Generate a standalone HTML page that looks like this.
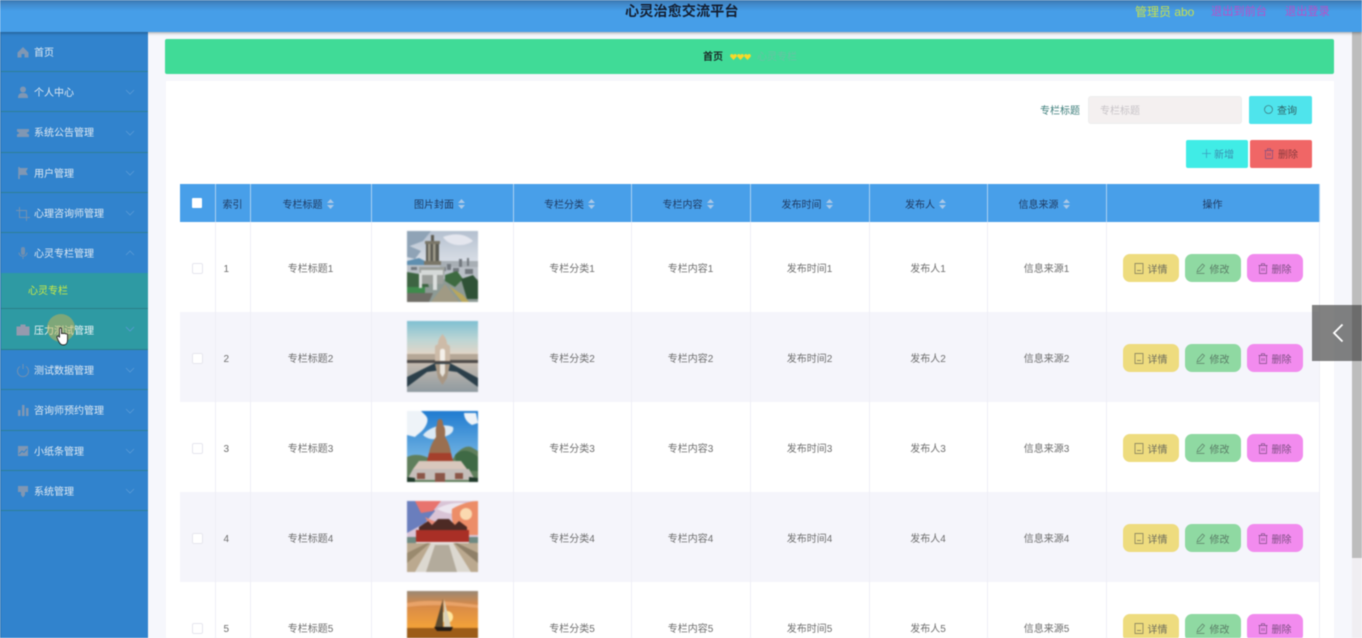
<!DOCTYPE html>
<html lang="zh"><head><meta charset="utf-8"><title>心灵治愈交流平台</title>
<style>
html,body{margin:0;padding:0;width:1362px;height:638px;overflow:hidden;background:#f6f7fc}
body{position:relative;font-family:"Liberation Sans","Noto Sans CJK SC",sans-serif;font-size:10px;color:#666}
#wrap{position:absolute;left:0;top:0;width:1362px;height:638px;overflow:hidden;filter:blur(.6px)}
.a{position:absolute}
#top{left:0;top:0;width:1362px;height:32px;background:linear-gradient(#3b76ad 0,#4189cb 4px,#469ee8 11px,#469ee8 100%);box-shadow:0 1px 3px rgba(0,0,0,.35);z-index:3}
#top span{position:absolute;white-space:nowrap;font-size:11.2px;top:5px;line-height:15px}
#side{left:0;top:0;width:148px;height:638px;background:#3183cd;border-left:1px solid #2a70ae;box-sizing:border-box}
.m{position:absolute;left:0;width:147px;box-sizing:border-box;border-bottom:1px solid #2e7f96;color:#dfe9f2}
.m b{position:absolute;left:33px;font-weight:400;white-space:nowrap;line-height:14px;margin-top:2px}
.m svg.ic{position:absolute;left:15px;width:14px;height:14px;opacity:.85}
.m svg.ch{position:absolute;left:124px;width:10px;height:6px}
#bread{left:165px;top:39px;width:1169px;height:35px;background:#40db97;border-radius:2px}
#card{left:166px;top:81px;width:1168px;height:557px;background:#fff}
table{position:absolute;left:180px;top:184px;width:1139px;border-collapse:collapse;table-layout:fixed}
th{height:38px;background:#489fe9;color:#1f3b63;font-weight:400;border-right:1px solid #a9d0f2;padding:0;text-align:center;box-sizing:border-box}
td{height:90px;padding:0;text-align:center;border-right:1px solid #eeeef6;box-sizing:border-box;color:#6e6e6e}
tr.e td{background:#f5f5fb}
td:nth-child(-n+2){padding-top:4px}
td:nth-child(2){text-align:left;padding-left:8px}
th svg.s{width:7px;height:10px;vertical-align:-1px;margin-left:4px;margin-right:5px}
.cb{display:inline-block;width:9px;height:9px;border:1px solid #e6e6ee;background:#fff;border-radius:2px;vertical-align:middle}
.ops{display:flex;justify-content:flex-start;padding-left:16px;gap:6px;position:relative;top:1px}
.b{width:56px;height:28px;border-radius:7px;color:#6d6c5c;display:flex;align-items:center;justify-content:center;gap:4px;box-sizing:border-box}
.b svg{width:10px;height:11px}
.y{background:#eedc7f}.g{background:#8fd9a2;color:#5a7d66}.p{background:#f28bee;color:#7c4e82}
td svg.ph{display:block;margin:0 auto;width:71px;height:71px;position:relative;top:-1px;filter:blur(.5px)}
</style></head><body>
<svg width="0" height="0" style="position:absolute">
<symbol id="sort" viewBox="0 0 7 10"><path d="M3.500 0L7 4H0zM3.500 10L0 6h7z" fill="#a9c8e8"/></symbol>
<symbol id="doc" viewBox="0 0 10 11"><path d="M1 .5h8v10H1zM3 7.500h4" fill="none" stroke="#77745a" stroke-width=".7"/></symbol>
<symbol id="pen" viewBox="0 0 10 11"><path d="M1 9l1-3 4.500-5 2 1.700L4 8zM.5 10.400h8" fill="none" stroke="#5a7d66" stroke-width=".7"/></symbol>
<symbol id="del" viewBox="0 0 10 11"><path d="M1.500 2.500h7v8h-7zM.5 2.500h9M3.500 2.500V.7h3v1.800M4 5v3M6 5v3" fill="none" stroke="#7c4e82" stroke-width=".7"/></symbol>
<symbol id="chd" viewBox="0 0 10 6"><path d="M1 1l4 4 4-4" fill="none" stroke="#5a9bd6" stroke-width=".8"/></symbol>
<symbol id="chu" viewBox="0 0 10 6"><path d="M1 5l4-4 4 4" fill="none" stroke="#5a9bd6" stroke-width=".8"/></symbol>
<symbol id="heart" viewBox="0 0 8 7"><path d="M4 7L.4 3.200C-.6 1.600.6 0 2 0c1 0 1.600.5 2 1.200C4.400.5 5 0 6 0c1.400 0 2.600 1.600 1.600 3.200z" fill="#f7d92a"/></symbol>
</svg>
<div id="wrap">
<div class="a" id="top">
<span style="left:625px;top:4px;font-size:14.2px;font-weight:700;color:#141e30;line-height:16px">心灵治愈交流平台</span>
<span style="left:1135px;color:#c5e04e;font-size:12px">管理员 abo</span>
<span style="left:1211px;color:#b850c8">退出到前台</span>
<span style="left:1285px;color:#b850c8">退出登录</span>
</div>
<div class="a" id="side">
<div class="m" style="top:32px;height:40px"><svg class="ic" style="top:13px" viewBox="0 0 14 14"><path d="M7 2L1.500 7.500V12.500H5.500V9H8.500V12.500H12.500V7.500z" fill="#8d9bb0"/></svg><b style="top:13px">首页</b></div>
<div class="m" style="top:72px;height:40px"><svg class="ic" style="top:13px" viewBox="0 0 14 14"><circle cx="7" cy="4.500" r="3" fill="#8d9bb0"/><path d="M2 13c0-4 2-5 5-5s5 1 5 5z" fill="#8d9bb0"/></svg><b style="top:13px">个人中心</b><svg class="ch" style="top:17px"><use href="#chd"/></svg></div>
<div class="m" style="top:112px;height:41px"><svg class="ic" style="top:14px" viewBox="0 0 14 14"><path d="M1 3h12v2.500L10.500 7 13 8.500V11H1V8.500L3.500 7 1 5.500z" fill="#8d9bb0"/></svg><b style="top:13px">系统公告管理</b><svg class="ch" style="top:18px"><use href="#chd"/></svg></div>
<div class="m" style="top:153px;height:40px"><svg class="ic" style="top:13px" viewBox="0 0 14 14"><path d="M3 1v12" stroke="#8d9bb0" stroke-width="1.500"/><path d="M3 2h9L10 5.500 12 9H3z" fill="#8d9bb0"/></svg><b style="top:13px">用户管理</b><svg class="ch" style="top:17px"><use href="#chd"/></svg></div>
<div class="m" style="top:193px;height:40px"><svg class="ic" style="top:14px" viewBox="0 0 14 14"><path d="M3.500 0V10.500H14M0 3.500H10.500V14" fill="none" stroke="#7d93ad" stroke-width="1"/></svg><b style="top:13px">心理咨询师管理</b><svg class="ch" style="top:17px"><use href="#chd"/></svg></div>
<div class="m" style="top:233px;height:40px;border-bottom:0"><svg class="ic" style="top:13px" viewBox="0 0 14 14"><rect x="5" y="1" width="4" height="8" rx="2" fill="#7d93ad"/><path d="M3 6.500c0 5 8 5 8 0M7 10v3" fill="none" stroke="#7d93ad"/></svg><b style="top:13px">心灵专栏管理</b><svg class="ch" style="top:17px"><use href="#chu"/></svg></div>
<div class="m" style="top:273px;height:36px;background:#2e9aa3;border-bottom:1px solid #2b7f88"><b style="left:27px;top:10px;color:#c9ea45">心灵专栏</b></div>
<div class="m" style="top:309px;height:41px;background:#2e9aa3;border-bottom:1px solid #2b7f88;color:#eef6f6"><svg class="ic" style="top:13px" viewBox="0 0 14 14"><path d="M1 5h12v8H1zM5 5V3h4v2" fill="#a89ab0" stroke="#a89ab0"/></svg><b style="top:14px">压力测试管理</b><svg class="ch" style="top:17px"><use href="#chd"/></svg></div>
<div class="m" style="top:350px;height:40px"><svg class="ic" style="top:13px" viewBox="0 0 14 14"><path d="M4 3.500a5.500 5.500 0 1 0 6 0M7 1v5" fill="none" stroke="#7d93ad"/></svg><b style="top:13px">测试数据管理</b><svg class="ch" style="top:17px"><use href="#chd"/></svg></div>
<div class="m" style="top:390px;height:41px"><svg class="ic" style="top:13px" viewBox="0 0 14 14"><path d="M2 7h2.500v6H2zM6 2h2.500v11H6zM10 5h2.500v8H10z" fill="#8d9bb0"/></svg><b style="top:13px">咨询师预约管理</b><svg class="ch" style="top:18px"><use href="#chd"/></svg></div>
<div class="m" style="top:431px;height:40px"><svg class="ic" style="top:13px" viewBox="0 0 14 14"><path d="M2 2h10v10H2z" fill="#8d9bb0"/><path d="M3 10l3-3 2 1.500L11 5" fill="none" stroke="#3183cd"/></svg><b style="top:13px">小纸条管理</b><svg class="ch" style="top:17px"><use href="#chd"/></svg></div>
<div class="m" style="top:471px;height:40px"><svg class="ic" style="top:13px" viewBox="0 0 14 14"><path d="M2 2h10v6H9v3l-2 2.500L5 11V8H2z" fill="#8d9bb0"/></svg><b style="top:13px">系统管理</b><svg class="ch" style="top:17px"><use href="#chd"/></svg></div>
</div>
<div class="a" style="left:47px;top:314px;width:28px;height:28px;border-radius:50%;background:rgba(205,180,80,.5)"></div>
<svg class="a" style="left:56px;top:327px;width:14px;height:19px" viewBox="0 0 14 19"><path d="M3.500 2c0-1.500 2-1.500 2 0v5c0-1 2-1 2 0 0-1 2-1 2 .3 0-.8 2-.8 2 .5V13c0 3-1.500 5-4 5-2.500 0-3.500-1-5-4L1 10.500c-.5-1.200 1-2 2-1l.5 1z" fill="#fff" stroke="#222" stroke-width=".9"/></svg>

<div class="a" id="bread"><span class="a" style="left:538px;top:12px;color:#1a2c28;font-weight:700;white-space:nowrap;line-height:14px">首页</span>
<svg class="a" style="left:565px;top:15px;width:7px;height:6px"><use href="#heart"/></svg><svg class="a" style="left:572px;top:15px;width:7px;height:6px"><use href="#heart"/></svg><svg class="a" style="left:579px;top:15px;width:7px;height:6px"><use href="#heart"/></svg>
<span class="a" style="left:592px;top:12px;color:#68c3a4;white-space:nowrap;line-height:14px">心灵专栏</span></div>
<div class="a" id="card"></div>

<span class="a" style="left:1040px;top:105px;color:#3f7f7c;white-space:nowrap;line-height:14px">专栏标题</span>
<div class="a" style="left:1088px;top:96px;width:154px;height:28px;background:#f4f0f0;border:1px solid #eee;border-radius:3px;box-sizing:border-box"><span class="a" style="left:11px;top:8px;color:#c8c4c8;white-space:nowrap;line-height:14px">专栏标题</span></div>
<div class="a" style="left:1249px;top:96px;width:63px;height:28px;background:#4fe4ec;border-radius:2px"><svg class="a" style="left:14px;top:8px;width:11px;height:11px" viewBox="0 0 11 11"><circle cx="5.500" cy="5.500" r="4" fill="none" stroke="#3f7f85" stroke-width=".8"/></svg><span class="a" style="left:28px;top:9px;color:#2f6468;white-space:nowrap;line-height:14px">查询</span></div>
<div class="a" style="left:1186px;top:140px;width:62px;height:28px;background:#40ece6;border-radius:2px"><svg class="a" style="left:15px;top:8px;width:11px;height:11px" viewBox="0 0 11 11"><path d="M5.500 1v9M1 5.500h9" stroke="#3a9fc0" stroke-width=".8"/></svg><span class="a" style="left:28px;top:9px;color:#3a8fb0;white-space:nowrap;line-height:14px">新增</span></div>
<div class="a" style="left:1250px;top:140px;width:62px;height:28px;background:#f06666;border-radius:2px"><svg class="a" style="left:14px;top:8px;width:10px;height:11px"><use href="#del"/></svg><span class="a" style="left:28px;top:9px;color:#8a3a3e;white-space:nowrap;line-height:14px">删除</span></div>

<table>
<colgroup><col style="width:35px"><col style="width:35px"><col style="width:121px"><col style="width:142px"><col style="width:118px"><col style="width:119px"><col style="width:119px"><col style="width:118px"><col style="width:119px"><col style="width:213px"></colgroup>
<tr><th><span style="display:inline-block;width:10px;height:10px;background:#fff;border-radius:1px;vertical-align:middle"></span></th><th>索引</th><th>专栏标题<svg class="s"><use href="#sort"/></svg></th><th>图片封面<svg class="s"><use href="#sort"/></svg></th><th>专栏分类<svg class="s"><use href="#sort"/></svg></th><th>专栏内容<svg class="s"><use href="#sort"/></svg></th><th>发布时间<svg class="s"><use href="#sort"/></svg></th><th>发布人<svg class="s"><use href="#sort"/></svg></th><th>信息来源<svg class="s"><use href="#sort"/></svg></th><th>操作</th></tr>

<tr><td><span class="cb"></span></td><td>1</td><td>专栏标题1</td><td>
<svg class="ph" viewBox="0 0 71 71"><defs><linearGradient id="s1" x1="0" y1="0" x2="0" y2="1"><stop offset="0" stop-color="#b4c0cf"/><stop offset="1" stop-color="#dfe3ea"/></linearGradient></defs><rect width="71" height="36" fill="url(#s1)"/><path d="M0 0h24l-8 10-16 6zM0 14l14 6-6 8-8-2z" fill="#8fa3b6"/><path d="M36 6c10-4 22-4 30 4-8 6-24 6-30-4z" fill="#e4e6ee"/><path d="M0 30l12-3 8 4v5H0z" fill="#5f8fb0"/><rect y="34" width="71" height="37" fill="#8d9a95"/><path d="M0 34h71v14H0z" fill="#b9bfc6"/><path d="M33 30h38v6H33z" fill="#a7aeb4"/><path d="M40 33h4v6h-4zM52 28h3v8h-3zM60 27h2v8h-2zM34 36h5v4h-5zM46 37h6v4h-6zM58 38h8v5h-8zM4 36h6v3H4z" fill="#72787e"/><path d="M0 41l18 3 4 12H0z" fill="#3d6442"/><path d="M0 56h18v6H0z" fill="#3f8a4c"/><path d="M38 44l12-4 6 8-8 8-10-6z" fill="#3d6a40"/><path d="M54 48l12-4 5 6v18H60z" fill="#2f5236"/><path d="M42 55l14 9 6 7h-7z" fill="#b9a75c"/><path d="M24 71l14-18 14 18z" fill="#a09a84"/><path d="M0 62h26l-4 9H0z" fill="#6f6d66"/><path d="M19 11h13v22H19z" fill="#5a5a52"/><path d="M21 12h2.500v20H21zM26 12h2.500v20H26z" fill="#a09c8c"/><path d="M24 4h3v7h-3z" fill="#5d5a50"/><path d="M18 10h15v3H18zM17 30h17v4H17z" fill="#7a7668"/><path d="M12 36h26l-2 17H14z" fill="#9ca09c"/><path d="M14 39h22v5H14z" fill="#d5d9d8"/><path d="M12 42h3v15h-3zM26 44h4v15h-4z" fill="#dcdfde"/></svg></td><td>专栏分类1</td><td>专栏内容1</td><td>发布时间1</td><td>发布人1</td><td>信息来源1</td><td><div class="ops"><div class="b y"><svg><use href="#doc"/></svg>详情</div><div class="b g"><svg><use href="#pen"/></svg>修改</div><div class="b p"><svg><use href="#del"/></svg>删除</div></div></td></tr>

<tr class="e"><td><span class="cb"></span></td><td>2</td><td>专栏标题2</td><td>
<svg class="ph" viewBox="0 0 71 71"><defs><linearGradient id="s2" x1="0" y1="0" x2="0" y2="1"><stop offset="0" stop-color="#7fc0d2"/><stop offset=".5" stop-color="#bcd5d4"/><stop offset="1" stop-color="#ecd5c4"/></linearGradient><linearGradient id="w2" x1="0" y1="0" x2="0" y2="1"><stop offset="0" stop-color="#d6c5b5"/><stop offset="1" stop-color="#8f9aa0"/></linearGradient></defs><rect width="71" height="37" fill="url(#s2)"/><rect y="33" width="71" height="38" fill="url(#w2)"/><path d="M0 33h71v8H0z" fill="#b5a797"/><path d="M0 39h71v3H0z" fill="#4d4a48"/><path d="M28 40V26c0-2 2-2 3-3 0-5 3-8 4.500-10 1.500 2 4.500 5 4.500 10 1 1 3 1 3 3v14z" fill="#cdbba8"/><path d="M33 40V30c0-3 5-3 5 0v10z" fill="#f4f0ea"/><path d="M0 66V56L28 42h15l28 15v9L50 51l-15-2-15 2z" fill="#2b3f4a"/><path d="M28 43h15l-3 14-4.500 7-4.500-7z" fill="#a89784"/><path d="M33 43h5v9l-2.500 4-2.500-4z" fill="#e8e4dc"/></svg></td><td>专栏分类2</td><td>专栏内容2</td><td>发布时间2</td><td>发布人2</td><td>信息来源2</td><td><div class="ops"><div class="b y"><svg><use href="#doc"/></svg>详情</div><div class="b g"><svg><use href="#pen"/></svg>修改</div><div class="b p"><svg><use href="#del"/></svg>删除</div></div></td></tr>

<tr><td><span class="cb"></span></td><td>3</td><td>专栏标题3</td><td>
<svg class="ph" viewBox="0 0 71 71"><defs><linearGradient id="s3" x1="0" y1="0" x2="0" y2="1"><stop offset="0" stop-color="#1f7bd0"/><stop offset="1" stop-color="#9cd0ec"/></linearGradient></defs><rect width="71" height="71" fill="url(#s3)"/><path d="M0 0h14c4 4 8 6 6 12-3 8-8 10-12 14L0 24z" fill="#eef3f8"/><path d="M16 24c6-8 20-12 30-8 2 6-6 10-12 10-6 4-14 2-18-2z" fill="#dbe9f4"/><path d="M57 2h12l2 10-6 2c-4-2-8-6-8-12z" fill="#eef3f8"/><path d="M0 46c8-4 16-2 24 2h22c4-8 12-14 18-12l7 4v31H0z" fill="#5f7f5c"/><path d="M48 44c6-6 14-6 23 2v14H50z" fill="#3f6a45"/><path d="M30 14c0-4 1-6 3-6s3 2 3 6c3 3 2 8 2 12 3 4 5 10 6 16H22c1-6 4-12 7-16 0-4-1-9 1-12z" fill="#9a6f50"/><path d="M22 42h22l2 8H20z" fill="#a5402c"/><path d="M12 50h42l6 8H6z" fill="#d8c7bc"/><path d="M6 58h56l6 11H0z" fill="#c5beba"/><path d="M10 62h8v6h-8zM28 62h10v9H28zM48 62h8v6h-8z" fill="#8b5648"/><path d="M0 66l8 1v4H0zM62 66l9 1v4h-9z" fill="#1f3a2a"/></svg></td><td>专栏分类3</td><td>专栏内容3</td><td>发布时间3</td><td>发布人3</td><td>信息来源3</td><td><div class="ops"><div class="b y"><svg><use href="#doc"/></svg>详情</div><div class="b g"><svg><use href="#pen"/></svg>修改</div><div class="b p"><svg><use href="#del"/></svg>删除</div></div></td></tr>

<tr class="e"><td><span class="cb"></span></td><td>4</td><td>专栏标题4</td><td>
<svg class="ph" viewBox="0 0 71 71"><rect width="71" height="36" fill="#d9c4d6"/><path d="M0 0h20l8 10-10 12L0 32z" fill="#6a7ebd"/><path d="M8 0h26l-8 10-12 2z" fill="#e8746e"/><path d="M30 8c10-6 22-8 41-4v10c-14-2-26 2-41-6z" fill="#ece6ef"/><path d="M45 8c10-6 20-8 26-8v34H50c-2-6-6-12-5-26z" fill="#ec8d68"/><circle cx="59" cy="13" r="6" fill="#fbd9b0"/><path d="M18 16c8 4 16 8 26 5-4 6-20 8-26-5z" fill="#ea8a78"/><path d="M12 26l9-6 4 4 6-6h11l6 6 4-4 8 6v3H12z" fill="#4d2a24"/><path d="M9 29h53v12H9z" fill="#a92f26"/><path d="M0 36h9v8H0zM62 36h9v8h-9z" fill="#6e8a82"/><rect y="42" width="71" height="29" fill="#bba98f"/><path d="M24 42h22l18 29H8z" fill="#dcd8d0"/><path d="M28 44h14l8 27H19z" fill="#b3ab9c"/><path d="M0 52l20-10h3L0 62z" fill="#9a8a6e"/><path d="M71 52L50 42h-3l24 20z" fill="#8f8068"/></svg></td><td>专栏分类4</td><td>专栏内容4</td><td>发布时间4</td><td>发布人4</td><td>信息来源4</td><td><div class="ops"><div class="b y"><svg><use href="#doc"/></svg>详情</div><div class="b g"><svg><use href="#pen"/></svg>修改</div><div class="b p"><svg><use href="#del"/></svg>删除</div></div></td></tr>

<tr><td><span class="cb"></span></td><td>5</td><td>专栏标题5</td><td>
<svg class="ph" viewBox="0 0 71 71"><defs><linearGradient id="s5" x1="0" y1="0" x2="0" y2="1"><stop offset="0" stop-color="#9a8874"/><stop offset=".2" stop-color="#d88a48"/><stop offset=".5" stop-color="#f2a13a"/><stop offset="1" stop-color="#b86a1c"/></linearGradient></defs><rect width="71" height="71" fill="url(#s5)"/><path d="M0 12c20-4 40-2 71 2v3C44 14 24 13 0 16z" fill="#e9a368"/><rect y="37" width="71" height="34" fill="#9c5c18"/><circle cx="40" cy="26" r="6" fill="#ffe7a0"/><path d="M36 8L28 36h8z" fill="#5a4a30"/><path d="M37 8l7 28h-7z" fill="#d8d0b8"/><path d="M27 36h19l-2 4H30z" fill="#221a14"/></svg></td><td>专栏分类5</td><td>专栏内容5</td><td>发布时间5</td><td>发布人5</td><td>信息来源5</td><td><div class="ops"><div class="b y"><svg><use href="#doc"/></svg>详情</div><div class="b g"><svg><use href="#pen"/></svg>修改</div><div class="b p"><svg><use href="#del"/></svg>删除</div></div></td></tr>
</table>

<div class="a" style="left:1352px;top:32px;width:10px;height:526px;background:#bdbdbd"></div>
<div class="a" style="left:1352px;top:558px;width:10px;height:80px;background:#f0eef2"></div>
<div class="a" style="left:1312px;top:305px;width:50px;height:56px;background:rgba(70,70,70,.68)"><svg class="a" style="left:20px;top:18px;width:12px;height:20px" viewBox="0 0 12 20"><path d="M10.500 1.500L2 10l8.500 8.500" fill="none" stroke="#fff" stroke-width="1.800"/></svg></div>
</div>
</body></html>
